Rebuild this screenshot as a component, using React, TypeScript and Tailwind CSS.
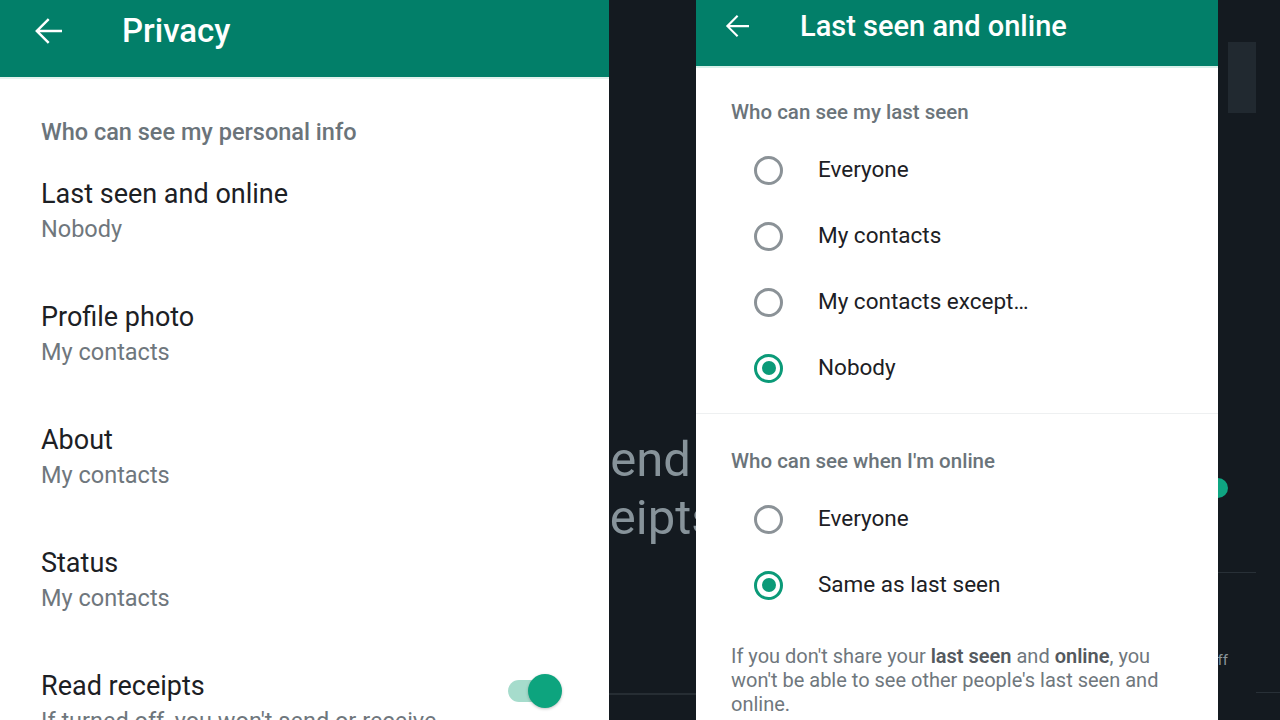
import React from "react";

const font = { fontFamily: "Roboto, 'Noto Sans', sans-serif" };

const BackArrow = ({ size }: { size: number }) => (
  <svg width={size} height={size} viewBox="0 0 24 24" fill="white">
    <path d="M20 11.25H7.3l5.6-5.6-1-1L4.6 12l7.3 7.35 1-1-5.6-5.6H20z" />
  </svg>
);

interface Setting {
  title: string;
  value: string;
}

const settings: Setting[] = [
  { title: "Last seen and online", value: "Nobody" },
  { title: "Profile photo", value: "My contacts" },
  { title: "About", value: "My contacts" },
  { title: "Status", value: "My contacts" },
];

const Radio = ({ checked }: { checked?: boolean }) =>
  checked ? (
    <span className="flex h-[29px] w-[29px] shrink-0 items-center justify-center rounded-full border-[3px] border-[#0b9a78]">
      <span className="h-[14px] w-[14px] rounded-full bg-[#0b9a78]" />
    </span>
  ) : (
    <span className="h-[29px] w-[29px] shrink-0 rounded-full border-[3px] border-[#8b9297]" />
  );

const RadioRow = ({ label, checked }: { label: string; checked?: boolean }) => (
  <div className="flex h-[66px] items-center pl-[58px]">
    <Radio checked={checked} />
    <span className="ml-[35px] text-[22.5px] text-[#1c2024]">{label}</span>
  </div>
);

function PrivacyScreen() {
  return (
    <div className="flex w-[609px] shrink-0 flex-col overflow-hidden bg-white">
      <div className="flex h-[77px] shrink-0 items-start bg-[#027f69] pt-[10px]">
        <span className="ml-[27px]">
          <BackArrow size={42} />
        </span>
        <span className="ml-[53px] text-[33px] leading-[42px] font-medium text-white">Privacy</span>
      </div>
      <div className="h-[2px] shrink-0 bg-[#e3f2ee]" />
      <div className="px-[41px] pt-[39px]">
        <p className="text-[23.5px] leading-[28px] font-medium text-[#6b747a]">
          Who can see my personal info
        </p>
        <div className="mt-[32px]">
          {settings.map((s) => (
            <div key={s.title} className="h-[123px]">
              <p className="text-[27px] leading-[32px] text-[#1c2024]">{s.title}</p>
              <p className="mt-[4px] text-[23.5px] leading-[30px] text-[#6f777d]">{s.value}</p>
            </div>
          ))}
          <div className="flex items-start justify-between">
            <div>
              <p className="text-[27px] leading-[32px] text-[#1c2024]">Read receipts</p>
              <p className="mt-[4px] whitespace-nowrap text-[23.5px] leading-[30px] text-[#6f777d]">
                If turned off, you won't send or receive
              </p>
            </div>
            {/* switch, on */}
            <div className="mr-[6px] mt-[4px] flex h-[34px] w-[54px] shrink-0 items-center">
              <div className="relative h-[22px] w-[40px] rounded-full bg-[#a6dccc]">
                <div className="absolute -right-[14px] -top-[6px] h-[34px] w-[34px] rounded-full bg-[#0da47e] shadow-[0_1px_3px_rgba(0,0,0,0.25)]" />
              </div>
            </div>
          </div>
        </div>
      </div>
    </div>
  );
}

function DarkGap() {
  return (
    <div className="flex w-[87px] shrink-0 flex-col overflow-hidden bg-[#141a20]">
      <div className="pt-[431px] text-[49px] leading-[58px] whitespace-nowrap text-[#87939a]">
        <p className="ml-[-24px]">send</p>
        <p className="ml-[-67px]">receipts</p>
      </div>
      <div className="mt-[146px] h-[2px] shrink-0 bg-[#262d33]" />
    </div>
  );
}

function LastSeenScreen() {
  return (
    <div className="flex w-[522px] shrink-0 flex-col overflow-hidden bg-white">
      <div className="flex h-[66px] shrink-0 items-start bg-[#027f69] pt-[8px]">
        <span className="ml-[23px]">
          <BackArrow size={36} />
        </span>
        <span className="ml-[45px] text-[29px] leading-[36px] font-medium text-white">
          Last seen and online
        </span>
      </div>
      <div className="h-[2px] shrink-0 bg-[#d8f1ea]" />
      <div className="pt-[31px]">
        <p className="pl-[35px] text-[20.5px] leading-[26px] font-medium text-[#6b747a]">
          Who can see my last seen
        </p>
        <div className="mt-[12px]">
          <RadioRow label="Everyone" />
          <RadioRow label="My contacts" />
          <RadioRow label="My contacts except…" />
          <RadioRow label="Nobody" checked />
        </div>
        <div className="mt-[12px] h-[1px] bg-[#eef0f1]" />
        <p className="mt-[34px] pl-[35px] text-[20.5px] leading-[26px] font-medium text-[#6b747a]">
          Who can see when I'm online
        </p>
        <div className="mt-[12px]">
          <RadioRow label="Everyone" />
          <RadioRow label="Same as last seen" checked />
        </div>
        <p className="mt-[26px] pl-[35px] pr-[40px] text-[20px] leading-[24px] text-[#6f777d]">
          If you don't share your <b className="font-semibold text-[#54595e]">last seen</b> and{" "}
          <b className="font-semibold text-[#54595e]">online</b>, you won't be able to see other
          people's last seen and online.
        </p>
      </div>
    </div>
  );
}

function DarkEdge() {
  return (
    <div className="flex w-[62px] shrink-0 flex-col overflow-hidden bg-[#141a20]">
      <div className="mt-[42px] ml-[10px] h-[71px] w-[28px] shrink-0 bg-[#212930]" />
      <div className="mt-[365px] ml-[-10px] h-[20px] w-[20px] shrink-0 rounded-full bg-[#0fa582]" />
      <div className="mt-[74px] h-[1px] w-[38px] shrink-0 bg-[#283037]" />
      <p className="mt-[77px] ml-[-9px] text-[15px] leading-[20px] text-[#8a959b]">off</p>
      <div className="mt-[22px] ml-[38px] h-[1px] w-[24px] shrink-0 bg-[#283037]" />
    </div>
  );
}

export default function App() {
  return (
    <div className="flex h-[720px] w-[1280px] overflow-hidden" style={font}>
      <PrivacyScreen />
      <DarkGap />
      <LastSeenScreen />
      <DarkEdge />
    </div>
  );
}
